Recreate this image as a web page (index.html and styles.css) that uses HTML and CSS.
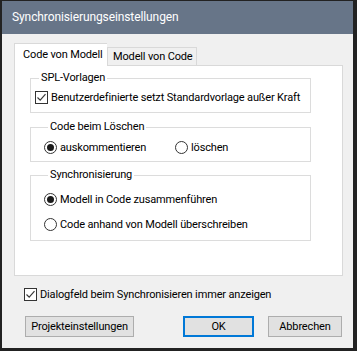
FILE: index.html
```html
<!DOCTYPE html>
<html lang="de">
<head>
    <meta charset="UTF-8">
    <title>Synchronisierungseinstellungen</title>
    <link rel="stylesheet" href="styles.css">
</head>
<body>
    <div class="dialog">
        <div class="title-bar">Synchronisierungseinstellungen</div>
        <div class="dialog-body">
            <div class="tabs">
                <div class="tab active">Code von Modell</div>
                <div class="tab">Modell von Code</div>
            </div>
            <div class="panel">
                <fieldset class="group group-spl">
                    <legend>SPL-Vorlagen</legend>
                    <label class="option">
                        <span class="check">
                            <svg width="11" height="11" viewBox="0 0 11 11"><path d="M1.5 5.5 L4.2 8.2 L9.5 2.2" fill="none" stroke="#3a3a3a" stroke-width="1.2"/></svg>
                        </span>
                        Benutzerdefinierte setzt Standardvorlage außer Kraft
                    </label>
                </fieldset>

                <fieldset class="group group-delete">
                    <legend>Code beim Löschen</legend>
                    <div class="row">
                        <label class="option"><span class="radio on"></span>auskommentieren</label>
                        <label class="option"><span class="radio"></span>löschen</label>
                    </div>
                </fieldset>

                <fieldset class="group group-sync">
                    <legend>Synchronisierung</legend>
                    <label class="option"><span class="radio on"></span>Modell in Code zusammenführen</label>
                    <label class="option"><span class="radio"></span>Code anhand von Modell überschreiben</label>
                </fieldset>
            </div>

            <label class="option footer-check">
                <span class="check">
                    <svg width="11" height="11" viewBox="0 0 11 11"><path d="M1.5 5.5 L4.2 8.2 L9.5 2.2" fill="none" stroke="#3a3a3a" stroke-width="1.2"/></svg>
                </span>
                Dialogfeld beim Synchronisieren immer anzeigen
            </label>

            <div class="buttons">
                <button class="btn btn-project">Projekteinstellungen</button>
                <button class="btn btn-ok">OK</button>
                <button class="btn btn-cancel">Abbrechen</button>
            </div>
        </div>
    </div>
</body>
</html>
```

FILE: styles.css
```css
body {
    margin: 0;
    padding: 0;
    font-family: Roboto, "Liberation Sans", sans-serif;
    font-size: 11px;
    letter-spacing: -0.15px;
    color: #000;
}

.dialog {
    width: 357px;
    height: 351px;
    box-sizing: border-box;
    border-style: solid;
    border-color: #222;
    border-width: 1px 4px 3px 2px;
    background-color: #f0f0f0;
    display: flex;
    flex-direction: column;
}

.title-bar {
    height: 33px;
    background-color: #677588;
    color: #fff;
    font-size: 12px;
    letter-spacing: -0.1px;
    line-height: 33px;
    padding-left: 10px;
    white-space: nowrap;
}

.dialog-body {
    padding: 9px 10px 0 12px;
    display: flex;
    flex-direction: column;
}

/* tabs */
.tabs {
    display: flex;
    align-items: flex-end;
}

.tab {
    width: 90px;
    height: 18px;
    line-height: 17px;
    box-sizing: border-box;
    padding: 0 0 0 5px;
    border: 1px solid #d9d9d9;
    border-bottom: none;
    background-color: #f0f0f0;
    white-space: nowrap;
}

.tab.active {
    width: 93px;
    height: 23px;
    line-height: 22px;
    background-color: #fff;
    border-right: none;
    padding-left: 8px;
    margin-bottom: -1px;
    position: relative;
    z-index: 1;
}

.panel {
    height: 211px;
    box-sizing: border-box;
    border: 1px solid #d9d9d9;
    background-color: #fff;
    padding: 5px 31px 0 15px;
}

/* group boxes */
.group {
    margin: 0;
    min-width: 0;
    border: 1px solid #dcdcdc;
    padding: 4px 6px 7px 4px;
}

.group legend {
    padding: 0 2px;
    margin-left: 4px;
    line-height: 14px;
}

.group-delete {
    margin-top: 7px;
    padding: 5px 6px 6px 13px;
}

.group-sync {
    margin-top: 6px;
    padding: 9px 6px 8px 13px;
    display: flex;
    flex-direction: column;
    gap: 9px;
}

.row {
    display: grid;
    grid-template-columns: 131px auto;
}

.option {
    display: flex;
    align-items: center;
    height: 16px;
    gap: 3px;
    white-space: nowrap;
}

.check {
    width: 13px;
    height: 13px;
    box-sizing: border-box;
    border: 1px solid #333;
    background-color: #fff;
    display: flex;
    align-items: center;
    justify-content: center;
}

.radio {
    width: 13px;
    height: 13px;
    box-sizing: border-box;
    border: 1px solid #333;
    border-radius: 50%;
    background-color: #fff;
    display: flex;
    align-items: center;
    justify-content: center;
}

.radio.on::after {
    content: "";
    width: 7px;
    height: 7px;
    border-radius: 50%;
    background-color: #1a1a1a;
}

.footer-check {
    margin: 10px 0 0 10px;
}

/* buttons */
.buttons {
    display: flex;
    margin-top: 14px;
    padding-left: 11px;
    padding-right: 1px;
}

.btn {
    height: 21px;
    box-sizing: border-box;
    font-family: inherit;
    font-size: 11px;
    letter-spacing: -0.15px;
    border: 1px solid #adadad;
    background-color: #e1e1e1;
    padding: 0;
    color: #000;
}

.btn-project {
    width: 109px;
}

.btn-ok {
    width: 71px;
    margin-left: auto;
    border: 2px solid #0078d7;
}

.btn-cancel {
    width: 74px;
    margin-left: 14px;
}
```
